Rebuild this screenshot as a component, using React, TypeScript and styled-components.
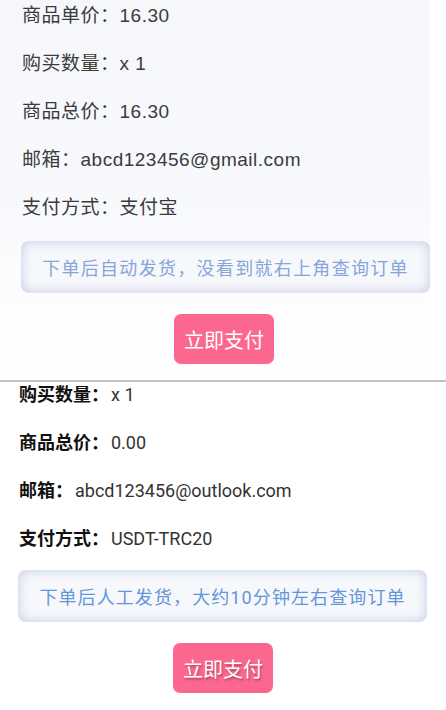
import styled, { createGlobalStyle } from "styled-components";

const GlobalStyle = createGlobalStyle`
  html, body {
    margin: 0;
    padding: 0;
    background: #ffffff;
  }
`;

const topRows = [
  { label: "商品单价：", value: "16.30" },
  { label: "购买数量：", value: "x 1" },
  { label: "商品总价：", value: "16.30" },
  { label: "邮箱：", value: "abcd123456@gmail.com" },
  { label: "支付方式：", value: "支付宝" },
];

const bottomRows = [
  { label: "购买数量：", value: "x 1" },
  { label: "商品总价：", value: "0.00" },
  { label: "邮箱：", value: "abcd123456@outlook.com" },
  { label: "支付方式：", value: "USDT-TRC20" },
];

export default function App() {
  return (
    <Page>
      <GlobalStyle />
      <TopShot>
        <Rows $gap={16}>
          {topRows.map((r) => (
            <TopRow key={r.label}>
              <span>{r.label}</span>
              <span>{r.value}</span>
            </TopRow>
          ))}
        </Rows>
        <Note $color="#88a5d7" $left={21} $spacing={1.3}>
          下单后自动发货，没看到就右上角查询订单
        </Note>
        <PayButton $shadow={false} $offset={18}>
          立即支付
        </PayButton>
      </TopShot>
      <Divider />
      <BottomShot>
        <Rows $gap={20}>
          {bottomRows.map((r) => (
            <BottomRow key={r.label}>
              <Label>{r.label}</Label>
              <Value>{r.value}</Value>
            </BottomRow>
          ))}
        </Rows>
        <Note $color="#6396d9" $left={18} $spacing={1.1} $font="Roboto">
          下单后人工发货，大约10分钟左右查询订单
        </Note>
        <PayButton $shadow $offset={0}>
          立即支付
        </PayButton>
      </BottomShot>
    </Page>
  );
}

const Page = styled.div`
  width: 446px;
  display: flex;
  flex-direction: column;
`;

const TopShot = styled.section`
  width: 430px;
  height: 380px;
  box-sizing: border-box;
  background: linear-gradient(180deg, #f6f7fa 0%, #f8f9fc 55%, #fefeff 85%, #ffffff 100%);
  display: flex;
  flex-direction: column;
  font-family: "Liberation Sans", "Noto Sans CJK SC", sans-serif;
`;

const Rows = styled.div<{ $gap: number }>`
  display: flex;
  flex-direction: column;
  gap: ${({ $gap }) => $gap}px;
`;

const TopRow = styled.div`
  height: 32px;
  line-height: 32px;
  padding-left: 22px;
  font-size: 19px;
  letter-spacing: 0.5px;
  color: #3b3b3b;
  white-space: nowrap;
`;

const Note = styled.div<{ $color: string; $left: number; $spacing: number; $font?: string }>`
  width: 409px;
  height: 52px;
  box-sizing: border-box;
  margin: 17px 0 0 ${({ $left }) => $left}px;
  border-radius: 8px;
  background: #f6f8fc;
  box-shadow: inset 0 0 12px rgba(160, 172, 212, 0.6);
  display: flex;
  align-items: center;
  justify-content: center;
  font-size: 18px;
  letter-spacing: ${({ $spacing }) => $spacing}px;
  color: ${({ $color }) => $color};
  font-family: ${({ $font }) => ($font ? `"${$font}", ` : "")}"Noto Sans CJK SC", sans-serif;
  white-space: nowrap;
`;

const PayButton = styled.button<{ $shadow: boolean; $offset: number }>`
  align-self: center;
  width: 100px;
  height: 50px;
  margin-top: 21px;
  margin-left: ${({ $offset }) => $offset}px;
  border: none;
  border-radius: 7px;
  background: #fc6790;
  color: #ffffff;
  font-family: "Noto Sans CJK SC", sans-serif;
  font-size: 20px;
  padding: 0;
  text-shadow: ${({ $shadow }) => ($shadow ? "1px 2px 2px rgba(110, 30, 55, 0.45)" : "none")};
`;

const Divider = styled.div`
  height: 2px;
  background: #c2c2c2;
`;

const BottomShot = styled.section`
  display: flex;
  flex-direction: column;
  font-family: "Roboto", "Noto Sans CJK SC", sans-serif;
  margin-top: -1px;
`;

const BottomRow = styled.div`
  height: 28px;
  line-height: 28px;
  padding-left: 19px;
  font-size: 18px;
  white-space: nowrap;
`;

const Label = styled.span`
  font-weight: 700;
  color: #111111;
`;

const Value = styled.span`
  margin-left: 2px;
  color: #333333;
`;
